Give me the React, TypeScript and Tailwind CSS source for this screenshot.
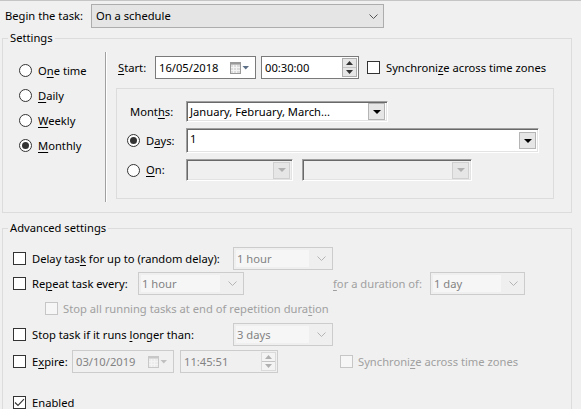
import React from "react";

function K({ children }: { children: React.ReactNode }) {
  return <span className="underline underline-offset-[2px] decoration-[1px]">{children}</span>;
}

function Radio({ checked }: { checked?: boolean }) {
  return (
    <span className="w-[13px] h-[13px] rounded-full border border-[#333333] bg-white flex items-center justify-center shrink-0">
      {checked && <span className="w-[7px] h-[7px] rounded-full bg-[#333333]" />}
    </span>
  );
}

function Check({ checked, disabled }: { checked?: boolean; disabled?: boolean }) {
  return (
    <span
      className={
        disabled
          ? "w-[13px] h-[13px] border border-[#c6c6c6] bg-[#f6f6f6] flex items-center justify-center shrink-0"
          : "w-[13px] h-[13px] border border-[#333333] bg-white flex items-center justify-center shrink-0"
      }
    >
      {checked && (
        <svg width="11" height="9" viewBox="0 0 11 9">
          <path d="M1 4.5 L4 7.5 L10 1.2" stroke="#333333" strokeWidth="1.1" fill="none" />
        </svg>
      )}
    </span>
  );
}

function Chevron({ color }: { color: string }) {
  return (
    <svg width="9" height="5" viewBox="0 0 9 5" className="shrink-0">
      <path d="M0.5 0.5 L4.5 4.5 L8.5 0.5" stroke={color} strokeWidth="1" fill="none" />
    </svg>
  );
}

// win10 style disabled combobox
function Combo({ value, className }: { value: string; className: string }) {
  return (
    <div className={`h-[23px] border border-[#cccccc] bg-[#efefef] flex items-center pl-[2px] pr-[6px] ${className}`}>
      <span className="flex-1 h-[17px] bg-[#f6f6f6] text-[#838383] leading-[17px] pl-[1px] mr-[8px]">{value}</span>
      <Chevron color="#b4b4b4" />
    </div>
  );
}

function CalIcon({ disabled }: { disabled?: boolean }) {
  const frame = disabled ? "#c8c8c8" : "#9a9a9a";
  const fill = disabled ? "#ececec" : "#dcdcdc";
  const tri = disabled ? "#c0c0c0" : "#5d6f86";
  return (
    <svg width="20" height="12" viewBox="0 0 20 12" className="shrink-0">
      <rect x="0.5" y="0.5" width="10" height="11" fill={fill} stroke={frame} />
      <rect x="0.5" y="0.5" width="10" height="2" fill={frame} />
      <path d="M3.5 3 V11 M6.5 3 V11 M1 5.5 H10 M1 8.5 H10" stroke="#f4f4f4" strokeWidth="1" />
      <path d="M12.5 4 L19 4 L15.75 7.5 Z" fill={tri} />
    </svg>
  );
}

function DateField({ value, disabled, className }: { value: string; disabled?: boolean; className: string }) {
  return (
    <div
      className={
        disabled
          ? `h-[23px] border border-[#cccccc] bg-[#f0f0f0] flex items-center pl-[3px] pr-[5px] text-[#838383] ${className}`
          : `h-[23px] border border-[#7a7a7a] bg-white flex items-center pl-[3px] pr-[5px] text-black ${className}`
      }
    >
      <span className="flex-1">{value}</span>
      <CalIcon disabled={disabled} />
    </div>
  );
}

function TimeField({ value, disabled, className }: { value: string; disabled?: boolean; className: string }) {
  const tri = disabled ? "#b0b0b0" : "#333333";
  return (
    <div
      className={
        disabled
          ? `h-[23px] border border-[#cccccc] bg-[#f0f0f0] flex items-center pl-[3px] pr-[1px] text-[#838383] ${className}`
          : `h-[23px] border border-[#7a7a7a] bg-white flex items-center pl-[3px] pr-[1px] text-black ${className}`
      }
    >
      <span className="flex-1">{value}</span>
      <div
        className={
          disabled
            ? "w-[15px] h-[19px] flex flex-col border border-[#dadada] bg-[#f3f3f3]"
            : "w-[15px] h-[19px] flex flex-col border border-[#adadad] bg-[#e6e6e6]"
        }
      >
        <div className="flex-1 flex items-center justify-center border-b border-[#c4c4c4]">
          <svg width="7" height="4" viewBox="0 0 7 4">
            <path d="M0 4 L3.5 0 L7 4 Z" fill={tri} />
          </svg>
        </div>
        <div className="flex-1 flex items-center justify-center">
          <svg width="7" height="4" viewBox="0 0 7 4">
            <path d="M0 0 L3.5 4 L7 0 Z" fill={tri} />
          </svg>
        </div>
      </div>
    </div>
  );
}

// classic sunken dropdown
function ClassicCombo({ value, disabled, className }: { value?: string; disabled?: boolean; className: string }) {
  return (
    <div
      className={`border border-t-[#a0a0a0] border-l-[#a0a0a0] border-b-white border-r-white shadow-[inset_1px_1px_0_#696969,inset_-1px_-1px_0_#e3e3e3] flex items-center pl-[3px] pr-[2px] ${
        disabled ? "bg-[#f0f0f0]" : "bg-white"
      } ${className}`}
    >
      <span className="flex-1 leading-[14px]">{value}</span>
      <div
        className={
          disabled
            ? "w-[17px] h-[17px] bg-[#e6e6e6] border border-[#d0d0d0] flex items-center justify-center"
            : "w-[17px] h-[17px] bg-[#e6e6e6] border border-[#b5b5b5] flex items-center justify-center"
        }
      >
        <svg width="8" height="4" viewBox="0 0 8 4">
          <path d="M0 0 L8 0 L4 4 Z" fill={disabled ? "#b0b0b0" : "#000000"} />
        </svg>
      </div>
    </div>
  );
}

export default function App() {
  return (
    <div className="w-[581px] h-[409px] overflow-hidden bg-[#f0f0f0] border-t border-[#c5c5c5] text-[11.2px] text-black font-['Segoe_UI','Noto_Sans',sans-serif] leading-[16px] whitespace-nowrap">
      <div className="flex items-center pt-[3px]">
        <span className="w-[91px] pl-[5px]">Begin the task:</span>
        <div className="w-[293px] h-[24px] bg-[#e5e5e5] border border-[#adadad] flex items-center pl-[4px] pr-[5px]">
          <span className="flex-1">On a schedule</span>
          <Chevron color="#555555" />
        </div>
      </div>

      <fieldset className="mt-[2px] ml-[2px] w-[570px] border border-[#dcdcdc]">
        <legend className="ml-[5px] px-[2px] leading-[16px]">Settings</legend>
        <div className="flex pt-[6px] pb-[10px]">
          <div className="w-[102px] flex flex-col pt-[6px] pl-[16px]">
            <label className="h-[25px] flex items-center gap-[6px]">
              <Radio />
              <span>
                O<K>n</K>e time
              </span>
            </label>
            <label className="h-[25px] flex items-center gap-[6px]">
              <Radio />
              <span>
                <K>D</K>aily
              </span>
            </label>
            <label className="h-[25px] flex items-center gap-[6px]">
              <Radio />
              <span>
                <K>W</K>eekly
              </span>
            </label>
            <label className="h-[25px] flex items-center gap-[6px]">
              <Radio checked />
              <span>
                <K>M</K>onthly
              </span>
            </label>
          </div>
          <div className="w-px h-[150px] bg-[#a0a0a0] border-r border-white box-content" />
          <div className="flex flex-col pl-[9px]">
            <div className="mt-[4px] h-[23px] flex items-center pl-[2px]">
              <span className="w-[37px]">
                <K>S</K>tart:
              </span>
              <DateField value="16/05/2018" className="w-[101px]" />
              <TimeField value="00:30:00" className="w-[98px] ml-[5px]" />
              <span className="ml-[8px]">
                <Check />
              </span>
              <span className="ml-[6px]">
                Synchroni<K>z</K>e across time zones
              </span>
            </div>
            <div className="mt-[9px] w-[438px] h-[111px] border border-[#dcdcdc] flex flex-col pt-[12px]">
              <div className="h-[21px] flex items-center">
                <span className="w-[69px] pl-[13px]">
                  Mont<K>h</K>s:
                </span>
                <ClassicCombo value="January, February, March..." className="w-[202px] h-[21px]" />
              </div>
              <div className="mt-[6px] h-[25px] flex items-center">
                <span className="w-[69px] pl-[10px] flex items-center gap-[6px]">
                  <Radio checked />
                  <span>
                    D<K>a</K>ys:
                  </span>
                </span>
                <ClassicCombo value="1" className="w-[353px] h-[25px] items-start pt-[3px]" />
              </div>
              <div className="mt-[6px] h-[22px] flex items-center">
                <span className="w-[69px] pl-[10px] flex items-center gap-[6px]">
                  <Radio />
                  <span>
                    <K>O</K>n:
                  </span>
                </span>
                <ClassicCombo disabled className="w-[107px] h-[22px]" />
                <ClassicCombo disabled className="w-[170px] h-[22px] ml-[9px]" />
              </div>
            </div>
          </div>
        </div>
      </fieldset>

      <fieldset className="mt-[7px] ml-[2px] w-[570px] h-[260px] border border-[#dcdcdc]">
        <legend className="ml-[5px] px-[2px] leading-[16px]">Advanced settings</legend>
        <div className="flex flex-col pl-[10px]">
          <div className="mt-[11px] h-[23px] flex items-center">
            <Check />
            <span className="ml-[6px] w-[201px]">
              Delay tas<K>k</K> for up to (random delay):
            </span>
            <Combo value="1 hour" className="w-[100px]" />
          </div>
          <div className="mt-[2px] h-[23px] flex items-center">
            <Check />
            <span className="ml-[6px] w-[106px]">
              Re<K>p</K>eat task every:
            </span>
            <Combo value="1 hour" className="w-[106px]" />
            <span className="ml-[89px] w-[97px] text-[#a0a0a0]">
              <K>f</K>or a duration of:
            </span>
            <Combo value="1 day" className="w-[95px]" />
          </div>
          <div className="mt-[2px] h-[23px] flex items-center pl-[32px]">
            <Check disabled />
            <span className="ml-[5px] text-[#a0a0a0]">
              Stop all running tasks at end of repetition dura<K>t</K>ion
            </span>
          </div>
          <div className="mt-[3px] h-[23px] flex items-center">
            <Check />
            <span className="ml-[6px] w-[201px]">
              Stop task if it runs <K>l</K>onger than:
            </span>
            <Combo value="3 days" className="w-[100px]" />
          </div>
          <div className="mt-[4px] h-[23px] flex items-center">
            <Check />
            <span className="ml-[6px] w-[40px]">
              E<K>x</K>pire:
            </span>
            <DateField value="03/10/2019" disabled className="w-[102px]" />
            <TimeField value="11:45:51" disabled className="w-[98px] ml-[6px]" />
            <span className="ml-[62px]">
              <Check disabled />
            </span>
            <span className="ml-[5px] text-[#a0a0a0]">
              Synchroni<K>z</K>e across time zones
            </span>
          </div>
          <div className="mt-[18px] h-[23px] flex items-center">
            <Check checked />
            <span className="ml-[6px]">
              Ena<K>b</K>led
            </span>
          </div>
        </div>
      </fieldset>
    </div>
  );
}
